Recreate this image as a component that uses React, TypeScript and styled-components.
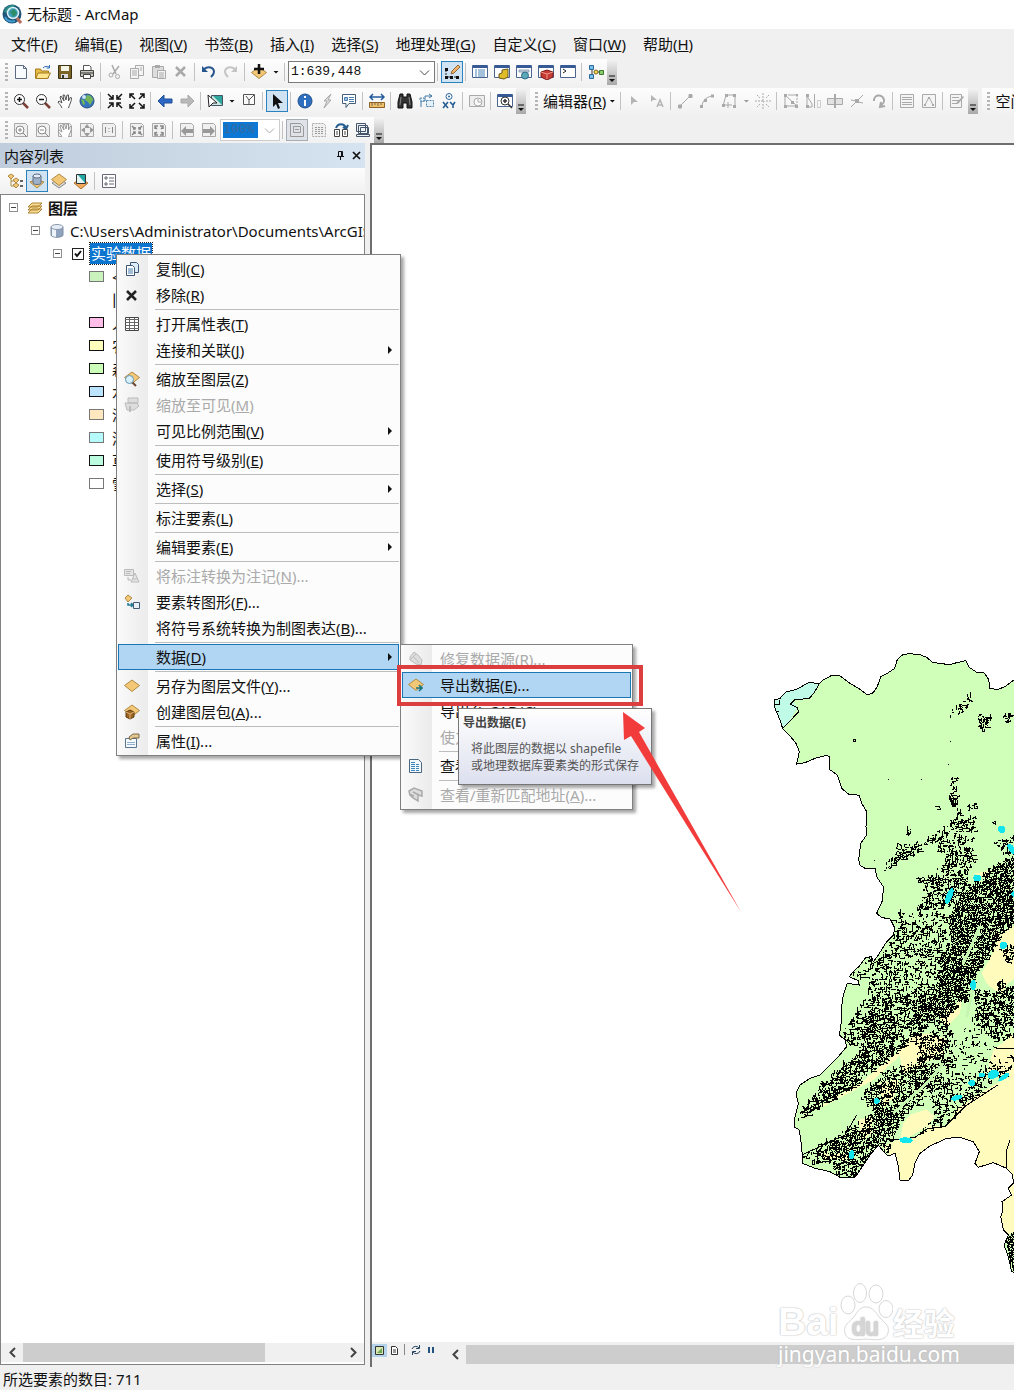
import React from 'react';
import styled, { createGlobalStyle, css } from 'styled-components';

const Global = createGlobalStyle`
  * { box-sizing: border-box; }
  body { margin: 0; background: #f0f0f0; }
  button, input, select { font: inherit; color: inherit; }
  svg { flex: none; }
`;

const Window = styled.div`
  position: relative;
  display: flex;
  flex-direction: column;
  min-height: 100vh;
  overflow: hidden;
  background: #f0f0f0;
  color: #111;
  font: 15px/20px 'Noto Sans', 'Noto Sans CJK SC', sans-serif;
  white-space: nowrap;
`;

const TitleBar = styled.header`
  display: flex;
  align-items: center;
  gap: 4px;
  height: 29px;
  padding: 0 2px 2px;
  background: #fff;
`;

const Title = styled.h1`
  margin: 0;
  font-size: 15px;
  font-weight: 400;
`;

const MenuBar = styled.nav`
  display: flex;
  align-items: center;
  gap: 1px;
  height: 30px;
  padding: 0 3px;
`;

const MenuButton = styled.button`
  border: 0;
  padding: 0 8px;
  background: none;
`;

const Toolbars = styled.div`
  display: flex;
  flex-direction: column;
  gap: 3px;
  height: 84px;
`;

const ToolRow = styled.div`
  display: flex;
  gap: 4px;
  height: 26px;
`;

const ToolStrip = styled.div`
  display: flex;
  flex: none;
  align-items: center;
  background: linear-gradient(#fdfdfd, #f1f1f1);
`;

const Grip = styled.span`
  flex: none;
  width: 3px;
  height: 18px;
  margin: 0 2px 0 5px;
  background: repeating-linear-gradient(#b5b5b5 0 2px, transparent 2px 4px);
`;

const Tool = styled.button<{ $on?: boolean; $muted?: boolean }>`
  display: flex;
  flex: none;
  align-items: center;
  justify-content: center;
  width: 22px;
  height: 22px;
  padding: 0;
  border: 1px solid transparent;
  background: none;
  ${p => p.$on && css`
    border-color: ${p.$muted ? '#a5adb5' : '#2c82bd'};
    background: ${p.$muted ? '#dfe3e7' : '#cfe3f3'};
  `}
`;

const Divider = styled.span`
  flex: none;
  width: 1px;
  height: 18px;
  margin: 0 3px 0 2px;
  background: #c2c2c2;
`;

const ShortDivider = styled(Divider)`
  height: 11px;
  background: #888;
`;

const Caret = styled.span<{ $muted?: boolean }>`
  flex: none;
  width: 6px;
  height: 3px;
  margin: 0 3px;
  background: ${p => (p.$muted ? '#999' : '#111')};
  clip-path: polygon(0 0, 100% 0, 50% 100%);
`;

const Overflow = styled.button`
  display: flex;
  align-items: flex-end;
  justify-content: center;
  align-self: stretch;
  width: 10px;
  padding: 0 0 2px;
  border: 0;
  background: linear-gradient(#f4f4f4, #a8a8a8);
`;

const ToolLabel = styled.button`
  padding: 0 0 0 3px;
  border: 0;
  background: none;
`;

const ComboBox = styled.label<{ $wide?: boolean }>`
  display: flex;
  align-items: center;
  width: ${p => (p.$wide ? '147px' : '60px')};
  height: 22px;
  padding: 0 4px 0 2px;
  border: 1px solid ${p => (p.$wide ? '#7a7a7a' : '#ccc')};
  background: #fff;
`;

const ComboSelect = styled.select<{ $picked?: boolean }>`
  flex: 1;
  min-width: 0;
  height: 16px;
  margin-right: ${p => (p.$picked ? '6px' : '0')};
  padding: 0;
  border: 0;
  appearance: none;
  background: ${p => (p.$picked ? '#0a78d4' : '#fff')};
  color: ${p => (p.$picked ? '#3a6a98' : '#111')};
  opacity: 1;
  font: 13px/16px 'Liberation Mono', monospace;
`;

const Workspace = styled.main`
  display: flex;
  flex: 1;
  gap: 5px;
`;

const Contents = styled.aside`
  display: flex;
  flex: none;
  flex-direction: column;
  width: 365px;
  padding-bottom: 2px;
`;

const PaneTitle = styled.div`
  display: flex;
  align-items: center;
  gap: 7px;
  height: 25px;
  padding: 0 4px;
  background: linear-gradient(90deg, #bfcddc, #d6e3f1);
`;

const PaneName = styled.h2`
  flex: 1;
  margin: 0;
  font-size: 15px;
  font-weight: 400;
`;

const PaneButton = styled.button`
  display: flex;
  width: 9px;
  height: 9px;
  padding: 0;
  border: 0;
  background: none;
`;

const PaneTools = styled.div`
  display: flex;
  align-items: center;
  height: 26px;
  padding-left: 4px;
  background: linear-gradient(#fdfdfd, #f1f1f1);
`;

const Tree = styled.div`
  display: flex;
  flex: 1;
  flex-direction: column;
  overflow: hidden;
  border: 1px solid #828282;
  background: #fff;
`;

const TreeRows = styled.div`
  flex: 1;
  padding-top: 1px;
`;

const TreeRow = styled.div<{ $level: number; $bold?: boolean }>`
  display: flex;
  align-items: center;
  height: 23px;
  padding-left: ${p => 8 + 22 * p.$level}px;
  font-weight: ${p => (p.$bold ? 700 : 400)};
`;

const Expander = styled.button`
  display: flex;
  flex: none;
  width: 9px;
  height: 9px;
  margin-right: 9px;
  padding: 3px 1px;
  border: 1px solid #8f8f8f;
  background: #444 content-box;
`;

const NodeText = styled.label`
  margin-left: 5px;
`;

const SelectedText = styled.label`
  margin-left: 4px;
  padding: 0 1px;
  outline: 1px dotted #222;
  background: #0b74cf;
  color: #fff;
  line-height: 21px;
`;

const CheckBox = styled.span`
  display: grid;
  width: 12px;
  height: 12px;
  margin: 0 2px 0 1px;
  > * { grid-area: 1 / 1; }
`;

const Check = styled.input`
  appearance: none;
  width: 12px;
  height: 12px;
  margin: 0;
  border: 1px solid #222;
  background: #fff;
`;

const Swatch = styled.span<{ $fill?: string; $soft?: boolean }>`
  flex: none;
  width: 15px;
  height: 11px;
  margin: 0 8px 0 14px;
  border: 1px solid ${p => (p.$fill ? (p.$soft ? '#777' : '#111') : 'transparent')};
  background: ${p => p.$fill || 'transparent'};
`;

const ScrollBar = styled.div`
  display: flex;
  flex: 1;
  align-items: center;
  height: 19px;
  background: #f0f0f0;
`;

const ScrollButton = styled.button`
  display: flex;
  flex: none;
  align-items: center;
  justify-content: center;
  width: 22px;
  height: 19px;
  padding: 0;
  border: 0;
  background: none;
`;

const ScrollTrack = styled.div`
  flex: 1;
  height: 19px;
`;

const ScrollThumb = styled.div<{ $share: string }>`
  width: ${p => p.$share};
  height: 19px;
  background: #cdcdcd;
`;

const TreeFooter = styled.div`
  display: flex;
  height: 21px;
`;

const MapPane = styled.section`
  display: flex;
  flex: 1;
  flex-direction: column;
  min-width: 0;
  padding-bottom: 3px;
  border-top: 2px solid #6e6e6e;
  border-left: 2px solid #6e6e6e;
`;

const MapView = styled.div`
  position: relative;
  flex: 1;
  overflow: hidden;
  background: #fff;
`;

const MapDrawing = styled.svg`
  position: absolute;
  left: 388px;
  top: 495px;
`;

const MapFooter = styled.div`
  display: flex;
  align-items: center;
  height: 22px;
  padding-top: 2px;
`;

const ViewButtons = styled.div`
  display: flex;
  flex: none;
  width: 72px;
`;

const ViewButton = styled.button<{ $on?: boolean }>`
  display: flex;
  align-items: center;
  justify-content: center;
  width: 15px;
  height: 13px;
  margin-bottom: 8px;
  padding: 0;
  border: 0;
  background: ${p => (p.$on ? '#b5d3ea' : 'none')};
`;

const StatusBar = styled.footer`
  height: 23px;
  padding: 2px 3px;
`;

const Menu = styled.ul<{ $x: number; $y: number; $w: number }>`
  position: absolute;
  left: ${p => p.$x}px;
  top: ${p => p.$y}px;
  width: ${p => p.$w}px;
  margin: 0;
  padding: 1px;
  list-style: none;
  border: 1px solid #808080;
  background: linear-gradient(90deg, #fafafa, #ebebeb 31px, #fcfcfc 31px);
  box-shadow: 3px 3px 3px rgba(0, 0, 0, 0.35);
`;

const MenuEntry = styled.li<{ $ruled?: boolean }>`
  ${p => p.$ruled && css`
    padding-top: 3px;
    background: linear-gradient(#bdbdbd, #bdbdbd) 37px 1px / 100% 1px no-repeat;
  `}
`;

const MenuItem = styled.button<{ $active?: boolean }>`
  display: flex;
  align-items: center;
  width: 100%;
  height: 26px;
  padding: 0 6px 0 5px;
  border: 1px solid ${p => (p.$active ? '#1b76b3' : 'transparent')};
  background: ${p => (p.$active ? '#b1d6f3' : 'none')};
  text-align: left;
  &:disabled { color: #aaa; }
`;

const MenuIcon = styled.span`
  display: flex;
  flex: none;
  width: 32px;
`;

const MenuText = styled.span`
  flex: 1;
`;

const SubArrow = styled.span`
  width: 4px;
  height: 8px;
  background: #111;
  clip-path: polygon(0 0, 100% 50%, 0 100%);
`;

const Tooltip = styled.div`
  position: absolute;
  left: 458px;
  top: 708px;
  width: 194px;
  height: 77px;
  padding: 5px 4px;
  border: 1px solid #767676;
  background: linear-gradient(#fff, #dcdfee);
  box-shadow: 3px 3px 3px rgba(0, 0, 0, 0.35);
  color: #555;
  font-size: 12px;
  line-height: 17px;
`;

const TooltipTitle = styled.strong`
  display: block;
  margin-bottom: 9px;
  color: #444;
`;

const TooltipText = styled.p`
  margin: 0;
  padding-left: 8px;
`;

const Highlight = styled.div`
  position: absolute;
  left: 397px;
  top: 665px;
  width: 246px;
  height: 41px;
  border: 4px solid #dc3d3f;
`;

const Arrow = styled.svg`
  position: absolute;
  left: 616px;
  top: 708px;
`;

const Watermark = styled.div`
  position: absolute;
  left: 778px;
  top: 1280px;
  color: #fff;
`;

const BrandRow = styled.div`
  display: flex;
  align-items: flex-end;
  height: 62px;
  font: 700 39px/40px 'Liberation Sans', sans-serif;
  text-shadow: 0 0 2px #bbb, 0 0 1px #ccc;
`;

const BrandCn = styled.span`
  font: 700 31px/40px 'Noto Sans CJK SC', sans-serif;
`;

const SiteName = styled.div`
  font: 21px/24px 'Noto Sans', sans-serif;
  text-shadow: 0 0 2px #bbb;
`;

/* ---------- icons ---------- */

const G = '#a9a9a9';
const Diamond = ({ y = 8, fill = '#f2c877' }: { y?: number; fill?: string }) => (
  <path d={`M8 ${y - 6}l7.500 5.500-7.500 6-7.500-6z`} fill={fill} stroke="#b08a45" />
);
const lens = (c: string, sign: React.ReactNode) => (
  <>
    <path d="M10 10l5 5" stroke="#7a4038" strokeWidth="2.500" />
    <circle cx="6.500" cy="6.500" r="5" fill="#fff" stroke={c} />
    {sign}
  </>
);
const hand = (c: string) => (
  <path d="M5 15c-1-3-3-4-4-6l1-1 3 2L3 4l1-1 3 5-1-6h1.500L9 7l1-5 1.500 0v6l2-4 1 1c0 4-2 6-3 10" fill="#fff" stroke={c} />
);
const page = (c: string, inner?: React.ReactNode) => (
  <>
    <path d="M1.500 1.500h11l2 2v11h-13z" fill="#f0f0f0" stroke={c} />
    {inner}
  </>
);
const windowIcon = (inner: React.ReactNode) => (
  <>
    <path d="M.5 1.500h15v12H.5z" fill="#fff" stroke="#4a6590" />
    <path d="M1 1h14v3H1z" fill="#355a96" />
    {inner}
  </>
);
const plus = <path d="M6.500 4v5M4 6.500h5" stroke="#111" strokeWidth="1.500" />;

const ICONS: Record<string, React.ReactNode> = {
  new: <><path d="M2.500 1.500h8l3 3v10h-11z" fill="#f8fbff" stroke="#5d6b80" /><path d="M10.500 1.500v3h3" stroke="#5d6b80" fill="none" /></>,
  open: <><path d="M.5 14V5h5l1 2h7v7z" fill="#e8bd45" stroke="#a37a1f" /><path d="M3 9h12.500l-3 5.500H.8z" fill="#ffe58e" stroke="#a37a1f" /><path d="M8 4c2-2 4-2 6-1M14.500 1v3h-3" stroke="#2e6db5" fill="none" /></>,
  save: <><path d="M1.500 1.500h13v13h-13z" fill="#7b6426" stroke="#3c3215" /><path d="M4 2h8v5H4z" fill="#f3f3e6" /><path d="M4 10h7v4H4z" fill="#ddd" /><path d="M5 11h2v3H5z" fill="#333" /></>,
  print: <><path d="M4.500 6V1.500h6l1.500 1.500v3" fill="#fff" stroke="#555" /><path d="M1.500 6.500h13v6h-13z" fill="#c9c9bf" stroke="#444" /><path d="M4.500 10.500h7v4h-7z" fill="#fff" stroke="#444" /><path d="M2 9h12" stroke="#333" /></>,
  scissors: <><path d="M5 1l4 9M12 2L6 10" stroke={G} strokeWidth="1.500" /><circle cx="4" cy="11" r="2" stroke={G} fill="none" /><circle cx="10.500" cy="12.500" r="2" stroke={G} fill="none" /></>,
  copyOff: <><path d="M6.500 1.500h8v10h-8z" fill="#f4f4f4" stroke={G} /><path d="M1.500 4.500h8v10h-8z" fill="#f4f4f4" stroke={G} /><path d="M3 7h5M3 9h5M3 11h5M11 4h2M11 6h2" stroke={G} /></>,
  copy: <><path d="M6.500 1.500h6l2 2v8h-8z" fill="#dcecf8" stroke="#3b5674" /><path d="M2.500 4.500h6l2 2v8h-8z" fill="#fff" stroke="#3b5674" /><path d="M4 8h5M4 10h5M4 12h5" stroke="#447cab" /></>,
  paste: <><path d="M1.500 2.500h11v11h-11z" fill="#ddd" stroke={G} /><path d="M4 1h5v3H4z" fill={G} /><path d="M6.500 6.500h8v8h-8z" fill="#f4f4f4" stroke={G} /><path d="M8 9h5M8 11h5M8 13h5" stroke={G} /></>,
  xOff: <path d="M3 3l9 9M12 3l-9 9" stroke={G} strokeWidth="2.500" />,
  x: <path d="M3 4l9 9M12 4l-9 9" stroke="#222" strokeWidth="2.500" />,
  undo: <><path d="M3 5c4-3 10-2 10 3 0 2-1 3-3 5" stroke="#26558d" fill="none" strokeWidth="2" /><path d="M1 2v6h6z" fill="#26558d" /></>,
  redo: <><path d="M12 5C8 2 2 3 2 8c0 2 1 3 3 5" stroke="#c4c4c4" fill="none" strokeWidth="2" /><path d="M14 2v6H8z" fill="#c4c4c4" /></>,
  add: <><Diamond y={9} /><path d="M8 0v10M3 5h10" stroke="#111" strokeWidth="2.500" /></>,
  edit: <><path d="M2 6v7h12v-2" stroke="#222" fill="none" strokeDasharray="2 1" /><path d="M1 4h3v3H1zM1 12h3v3H1zM6 12h3v3H6zM12 12h3v3h-3z" fill="#111" /><path d="M7 10l1-3 6-6 2 2-6 6z" fill="#efb56a" stroke="#94643b" /></>,
  toc: windowIcon(<path d="M3 6h2M3 8h2M3 10h2M3 12h2M6 6h7M6 8h7M6 10h7M6 12h7" stroke="#4b83b8" />),
  catalog: windowIcon(<path d="M5 14v-4l3-1V6l6-1v8l-4 2z" fill="#dfbc28" stroke="#6d5b18" />),
  search: windowIcon(<><path d="M3 6h10v2H3z" fill="#ccd9e4" stroke="#8aa0b5" /><circle cx="9" cy="11.500" r="3.500" fill="#57a9b7" stroke="#356a8a" /></>),
  toolbox: windowIcon(<><path d="M3 8l6-2 6 2v5l-6 3-6-3z" fill="#c63b32" stroke="#7d1f1c" /><path d="M3 8l6 2 6-2M9 10v5" stroke="#f0958d" /></>),
  python: windowIcon(<path d="M3 5l3 2-3 2" stroke="#222" fill="none" />),
  model: <><path d="M4 4v8M6 8h5" stroke="#333" /><path d="M1.500 1.500h4v4h-4zM1.500 10.500h4v4h-4z" fill="#7bc0e8" stroke="#28689c" /><circle cx="8" cy="8" r="2" fill="#f3d55c" stroke="#7d6820" /><path d="M11.500 6.500h4v4h-4z" fill="#8acb6b" stroke="#3f7a31" /></>,
  zoomIn: lens('#333', plus),
  zoomOut: lens('#333', <path d="M4 6.500h5" stroke="#111" strokeWidth="1.500" />),
  hand: hand('#555'),
  globe: <><circle cx="8" cy="8" r="7" fill="#3675bb" stroke="#2b4f7e" /><path d="M8 2c4 0 6 3 6 5l-3 5-2-3-3-2zM2 6l3 1 1 4-2 1z" fill="#74b657" /><circle cx="5" cy="4" r="2" fill="#cde6f5" /></>,
  shrink: <path d="M1 1l4 4M15 1l-4 4M1 15l4-4M15 15l-4-4M2 6h4V2M14 6h-4V2M2 10h4v4M14 10h-4v4" stroke="#111" fill="none" strokeWidth="1.500" />,
  grow: <path d="M2 2l4 4M14 2l-4 4M2 14l4-4M14 14l-4-4M1 5V1h4M15 5V1h-4M1 11v4h4M15 11v4h-4" stroke="#111" fill="none" strokeWidth="1.500" />,
  back: <path d="M1 8l6-6v4h8v4H7v4z" fill="#2d68c4" stroke="#214d94" />,
  forward: <path d="M15 8L9 2v4H2v4h7v4z" fill="#b9b9b9" stroke="#aaa" />,
  select: <><path d="M4.500 2.500h11v10h-11z" fill="#cfe8e3" stroke="#456" /><path d="M6 3h9v9z" fill="#2fa79c" /><path d="M1 2l9 8H6l-4 4z" fill="#fff" stroke="#222" /></>,
  clear: <path d="M2.500 1.500h11v10h-11zM5 3l3 4 5-5M8 7v4" fill="#fafafa" stroke="#555" />,
  pointer: <path d="M4 1v13l3-3 2 5 2-1-2-5h5z" fill="#111" />,
  info: <><circle cx="8" cy="8" r="7" fill="#2f6fc0" stroke="#214f8b" /><path d="M8 3v2M8 7v6" stroke="#fff" strokeWidth="2" /></>,
  bolt: <path d="M12 1L5 8h3l-3 7 7-8H9z" fill="#ddd" stroke={G} />,
  popup: <><path d="M1.500 1.500h13v9H8l-3 4v-4H1.500z" fill="#fff" stroke="#445d78" /><path d="M3.500 4.500h3v3h-3zM8 4.500h5M8 6.500h5M8 8.500h5" stroke="#4a7fb0" fill="#9cc4e2" /></>,
  measure: <><path d="M1 4h14M4 1L1 4l3 3M12 1l3 3-3 3" stroke="#245a9b" fill="none" strokeWidth="1.500" /><path d="M.5 9.500h15v5H.5z" fill="#efc16a" stroke="#8b6227" /><path d="M3 10v3M6 10v2M9 10v3M12 10v2" stroke="#765" /></>,
  find: <><path d="M3 1h3v3h4V1h3l2 8v6h-5v-5H6v5H1V9z" fill="#333" stroke="#111" /><path d="M4 4L3 12M12 4l1 8" stroke="#888" /></>,
  route: <><path d="M2 14V8h4V3h7M10 1l3 2-3 2" stroke="#3f78a9" fill="none" /><path d="M1 5h4v3H1zM7.500 7.500h7v6h-7z" fill="#e5f1fa" stroke="#4e84ad" strokeDasharray="2 1" /></>,
  xy: <><circle cx="8" cy="3.500" r="3" fill="#fff" stroke="#2d67a0" /><circle cx="8" cy="3.500" r="1" fill="#2d67a0" /><path d="M2 9l5 6M7 9l-5 6M9 9l3 3 2-3M12 12v3" stroke="#215992" strokeWidth="1.500" fill="none" /></>,
  time: <><path d="M.5 2.500h15v11H.5z" fill="#eee" stroke={G} /><circle cx="9" cy="9" r="4" fill="#fafafa" stroke={G} /><path d="M9 6v3h3" stroke={G} fill="none" /></>,
  viewer: windowIcon(<><circle cx="8" cy="8" r="4" fill="#fff" stroke="#333" /><path d="M8 6v4M6 8h4M11 11l4 4" stroke="#333" strokeWidth="1.500" /></>),
  editPlay: <path d="M4 3v9l3-3h4z" fill="#b4b4b4" />,
  editPlayA: <><path d="M2 2v7l2-2h4z" fill="#b4b4b4" /><path d="M8 14l3-7 3 7M9 12h4" fill="none" stroke="#b4b4b4" strokeWidth="1.500" /></>,
  line: <path d="M3 13L13 3M1.500 12h3v3h-3zM12 1.500h3v3h-3z" stroke={G} fill={G} />,
  arc: <><path d="M3 14c0-6 4-10 10-11" stroke={G} fill="none" /><path d="M1 12h3v3H1zM5 6h3v3H5zM12 1.500h3v3h-3z" fill={G} /></>,
  trace: <><path d="M2 13L5 2h9v12M3 12h8M7 9v6" stroke={G} fill="none" /><path d="M1 11h3v3H1zM4 1h3v3H4zM12 1h3v3h-3zM12 12h3v3h-3z" fill={G} /></>,
  spark: <path d="M8 0v5M8 11v5M0 8h5M11 8h5M2 2l3 3M11 11l3 3M14 2l-3 3M5 11l-3 3M7 7h2v2H7z" stroke={G} strokeDasharray="2 1" />,
  reshape: <><path d="M2 2v11h12zM5 2h9" stroke={G} fill="none" /><path d="M14 2v11" stroke={G} strokeDasharray="2 1" /><path d="M1 1h3v3H1zM1 12h3v3H1zM12 12h3v3h-3zM8 8h3v3H8zM13 1h2v2h-2z" fill={G} /></>,
  cutPoly: <><path d="M2 2v12M2 3l5 8v3H2M9.500 1v14" stroke={G} fill="none" /><path d="M1 1h3v3H1zM1 12h3v3H1z" fill={G} /><path d="M12.500 7.500h3v7h-3z" stroke={G} strokeDasharray="1 1" /></>,
  split: <><path d="M.5 5.500h15v6H.5z" fill="#e2e2e2" stroke={G} /><path d="M8 1v14" stroke={G} strokeWidth="2" /></>,
  divide: <><path d="M2 14L14 2M2 7l5 1M9 9l5 1" stroke={G} /><path d="M6 6h4v4H6z" fill={G} /></>,
  rotate: <path d="M3 8a5 5 0 1 1 7 4M10 9l-1 5 5-1" stroke={G} fill="none" strokeWidth="2" />,
  table: <><path d="M1.500 1.500h13v13h-13z" fill="#fff" stroke="#444" /><path d="M1 3.500h14M1 6.500h14M1 9.500h14M1 12.500h14M5.500 2v12M10.500 2v12" stroke="#666" /></>,
  tableOff: <path d="M1.500 1.500h13v13h-13zM3 4.500h10M3 6.500h10M3 9.500h10M3 11.500h10" fill="#f4f4f4" stroke={G} />,
  vertices: <><path d="M1.500 1.500h13v13h-13zM4 12l4-8 4 8" fill="#f4f4f4" stroke={G} /><path d="M3 11h2v2H3zM7 4h2v2H7zM11 11h2v2h-2z" fill={G} /></>,
  form: <><path d="M1.500 1.500h11v13h-11zM3 4.500h7M3 7.500h7M3 10.500h5" fill="#f4f4f4" stroke={G} /><path d="M7 10l7-7 1 1-6 7z" fill={G} /></>,
  pgZoomIn: page(G, <><circle cx="7" cy="8" r="4" fill="#fff" stroke="#888" /><path d="M7 6v4M5 8h4M10 11l4 4" stroke="#888" /></>),
  pgZoomOut: page(G, <><circle cx="7" cy="8" r="4" fill="#fff" stroke="#888" /><path d="M5 8h4M10 11l4 4" stroke="#888" /></>),
  pgHand: page(G, hand('#999')),
  pgFull: page(G, <path d="M8 2L5 6h6zM8 15l-3-4h6zM2 8l4-3v6zM15 8l-4-3v6z" fill="#999" />),
  pgOne: page(G, <path d="M4.500 5v6M8 6v1M8 9v1M11.500 5v6" stroke="#888" />),
  pgShrink: page(G, <path d="M3 4l3 3M13 4l-3 3M3 13l3-3M13 13l-3-3M4 7h2V5M12 7h-2V5M4 10h2v2M12 10h-2v2" stroke="#888" fill="none" strokeWidth="1.500" />),
  pgGrow: page(G, <path d="M4 5l2 2M12 5l-2 2M4 12l2-2M12 12l-2-2M4 7V4h3M12 7V4H9M4 10v3h3M12 10v3H9" stroke="#888" fill="none" strokeWidth="1.500" />),
  pgBack: page(G, <path d="M2 9l5-5v3h7v4H7v3z" fill="#999" />),
  pgNext: page(G, <path d="M14 9L9 4v3H2v4h7v3z" fill="#999" />),
  draft: <path d="M1.500 1.500h10l3 3v10h-13zM4.500 4.500h7v6h-7zM6 7.500h4" fill="none" stroke="#999" />,
  focus: <><path d="M1.500 1.500h11l2 2v11h-13z" stroke={G} strokeDasharray="2 1" fill="#f0f0f0" /><path d="M4 5.500h8M4 7.500h8M4 9.500h8M4 11.500h8" stroke="#999" strokeDasharray="2 1" /></>,
  change: <><path d="M3 6c2-5 8-5 10 0M10 5l3 2 2-4" stroke="#235c91" fill="none" strokeWidth="2" /><path d="M1.500 7.500h5v7h-5zM9.500 7.500h5v7h-5z" fill="#fff" stroke="#444" /><path d="M3 10h2M3 12h2M11 10h2M11 12h2" stroke="#444" /></>,
  pages: <path d="M1.500 1.500h9v8h-9zM3.500 3.500h9v8h-9zM5.500 5.500h8v6h-8zM1.500 14.500h13v-2h-13z" fill="#edf3f7" stroke="#46566a" />,
  byOrder: <><path d="M4 5v8h5M4 8h6" stroke="#b08a45" fill="none" /><path d="M1 3l3-2 3 2-3 3zM6 7l3-2 3 2-3 3zM6 12l3-2 3 2-3 3z" fill="#f2c877" stroke="#b08a45" /><path d="M13 8h3M13 13h3" stroke="#333" strokeWidth="1.500" /></>,
  cylinder: <><path d="M2 4v8c0 3 12 3 12 0V4" fill="#8fa3be" stroke="#7d8da3" /><path d="M3 5v8l4 1V5z" fill="#eef3f9" /><ellipse cx="8" cy="4" rx="6" ry="2.500" fill="#e6edf6" stroke="#8a99ad" /></>,
  bySource: <><path d="M1 9l7 6 7-6-3-1H4z" fill="#f2c877" stroke="#b08a45" /><path d="M4 3v7c0 2 8 2 8 0V3" fill="#9fb1c8" stroke="#5d6e85" /><ellipse cx="8" cy="3" rx="4" ry="2" fill="#e6edf6" stroke="#5d6e85" /></>,
  visible: <><path d="M1 10l7-5 7 5-7 5z" fill="#d9d9d9" stroke="#888" /><Diamond y={7} /></>,
  bySelect: <><path d="M1 10l7-4 7 4-7 6z" fill="#f2a858" stroke="#b07535" /><path d="M3.500 1.500h9v9h-9z" fill="#e3f4f2" stroke="#333" /><path d="M5 2h7v8z" fill="#22a7a4" /></>,
  options: <path d="M1.500 1.500h13v13h-13zM4 4h2v2H4zM4 10h2v2H4zM8 5h5M8 8h5M8 11h5" fill="#fff" stroke="#667" />,
  layers: <path d="M1 13h10l4-4H5zM1 10h10l4-4H5zM1 7h10l4-4H5z" fill="#f7dc92" stroke="#ae8434" />,
  diamond: <Diamond />,
  zoomLayer: <><Diamond y={7} /><path d="M8 11l4 4" stroke="#6b4630" strokeWidth="2" /><circle cx="5.500" cy="8.500" r="4" fill="#d9effa" stroke="#6195b5" /></>,
  zoomVisible: <><path d="M4 1h10v5H4zM1 6h12l2 3-5 4H3z" fill="#ddd" stroke="#bbb" /><path d="M6 9v6" stroke="#bbb" strokeWidth="2" /></>,
  annotate: <><path d="M.5 1.500h9v6h-9zM2 3.500h5M2 5.500h4" fill="#e4e4e4" stroke="#bbb" /><path d="M4 9v3h3M7 14l4-9 4 9zM9 11h4" stroke="#bbb" fill="#e4e4e4" /></>,
  toGraphic: <><path d="M1 4l3-3 4 3-4 4z" fill="#f2c877" stroke="#b08a45" /><path d="M4 9v2h5M7 9l2 2-2 2" stroke="#227a94" fill="none" strokeWidth="1.500" /><path d="M9.500 8.500h6v6h-6z" fill="#e9eff6" stroke="#445b77" /></>,
  pack: <><Diamond y={7} /><path d="M2 8l4-2 4 2v5l-4 2-4-2z" fill="#9b6424" stroke="#5c3a11" /><path d="M2 8l4 2 4-2M6 10v5" stroke="#e0b070" /></>,
  props: <><path d="M1.500 5.500h11v9h-11z" fill="#f5f9fc" stroke="#5b7590" /><path d="M3 9.500h8M3 11.500h8" stroke="#8fb0cc" /><path d="M5 4l4-3h6v4H9l-3 2z" fill="#e3c891" stroke="#7c6a48" /></>,
  repair: <path d="M2 6l4-5 4 3 4 5-1 5-5-1-6-4zM5 5l6 7M8 3L3 8" fill="#ddd" stroke="#bbb" />,
  exportData: <><Diamond /><path d="M8 11h6M11 8l3 3-3 3" stroke="#19747d" fill="none" strokeWidth="1.700" /></>,
  metadata: <><path d="M1.500 1.500h9l3 3v10h-12z" fill="#f1f8fd" stroke="#4b6780" /><path d="M3 4.500h5M3 6.500h8M3 8.500h8M3 10.500h8M3 12.500h8" stroke="#3f86ba" strokeDasharray="4 1" /></>,
  address: <path d="M1 4l5-3 8 3v5l-4-1v6l-5-3-3-3zM5 5l6 3M1 7l5 2" fill="#ddd" stroke="#aaa" strokeWidth="1.500" />,
};

const Icon = ({ name }: { name: string }) => (
  <svg width="16" height="16" viewBox="0 0 16 16" fill="none" aria-hidden="true">{ICONS[name]}</svg>
);

const Chevron = ({ dir, color = '#444', w = 1 }: { dir: 'left' | 'right' | 'down'; color?: string; w?: number }) => (
  <svg width="11" height="11" viewBox="0 0 11 11" fill="none" stroke={color} strokeWidth={w} aria-hidden="true">
    <path d={dir === 'down' ? 'M1 3.500l4.500 4.500 4.500-4.500' : dir === 'left' ? 'M8 1L3.500 5.500 8 10' : 'M3 1l4.500 4.500L3 10'} />
  </svg>
);

/* Underlines the access key written in brackets. */
const Label = ({ text }: { text: string }) => {
  const m = text.match(/^(.*\()([A-Z])(\).*)$/);
  return m ? <>{m[1]}<u>{m[2]}</u>{m[3]}</> : <>{text}</>;
};

/* "|" is a divider, "v" a caret, a leading "*" a pressed button. */
const Tools = ({ list }: { list: string }) => (
  <>
    {list.split(' ').map((n, i) => {
      if (n === '|') return <Divider key={i} />;
      if (n === 'v') return <Caret key={i} />;
      const name = n.replace('*', '');
      return (
        <Tool key={i} $on={n[0] === '*'} $muted={name === 'draft'} aria-label={name}>
          <Icon name={name} />
        </Tool>
      );
    })}
  </>
);

const More = () => (
  <Overflow aria-label="more">
    <svg width="8" height="8" viewBox="0 0 8 8" aria-hidden="true"><path d="M1 1h6" stroke="#111" /><path d="M1 4h6L4 7z" fill="#111" /></svg>
  </Overflow>
);

/* ---------- map ---------- */

type Pt = [number, number];
const pts = (s: string): Pt[] => s.split(' ').map(p => p.split(',').map(Number) as Pt);

const LAND =
  '770,114 735,140 712,149 690,145 686,118 672,98 650,97 628,82 617,62 590,68 570,74 545,71 518,67 500,52 480,44 450,41 430,43 412,58 404,85 385,98 362,110 352,140 340,158 322,165 300,148 270,130 240,108 215,106 190,120 178,130 145,128 110,148 78,156 60,175 43,180 45,205 60,240 68,266 90,288 108,310 118,335 110,372 135,368 165,355 200,346 210,352 208,388 232,405 245,445 265,462 298,466 305,490 320,515 318,560 320,585 302,610 296,660 300,676 315,685 345,684 350,710 370,740 368,780 350,820 365,833 390,836 405,865 400,885 380,905 355,945 340,965 335,950 318,952 298,978 280,995 268,1010 295,1022 298,1035 262,1030 250,1065 245,1100 245,1140 238,1185 255,1200 260,1220 235,1250 200,1285 180,1305 150,1315 120,1335 108,1360 115,1390 105,1430 102,1460 118,1470 125,1520 128,1570 165,1585 210,1595 240,1612 285,1612 300,1590 330,1545 355,1515 370,1535 385,1548 405,1540 415,1580 420,1620 445,1622 458,1605 465,1570 480,1540 510,1518 560,1495 600,1492 640,1505 658,1535 645,1570 655,1582 700,1568 740,1585 758,1605 760,1630 745,1645 755,1665 745,1672 726,1685 728,1715 722,1730 730,1770 745,1785 732,1815 745,1850 755,1895 770,1900';

const YELLOW = [
  '770,1300 720,1325 660,1360 600,1400 555,1460 510,1455 480,1480 450,1500 410,1500 370,1520 400,1560 410,1640 480,1640 600,1600 770,1800',
  '430,1450 450,1425 500,1408 525,1430 500,1460 450,1490 420,1500',
  '770,850 720,885 695,945 665,1000 680,1030 720,1065 745,1030 770,1010',
  '560,1105 605,1080 600,1120 560,1160 540,1135',
  '450,1190 500,1180 555,1195 550,1240 500,1265 430,1300 415,1230',
  '160,1410 300,1330 420,1230 455,1215 340,1320 200,1395',
  '355,1330 420,1315 400,1375 370,1405',
  '295,1440 335,1430 335,1480 305,1500',
  '170,1540 270,1540 260,1562 200,1560',
  '700,1230 770,1175 770,1310 680,1300',
  '725,1785 745,1785 762,1770 762,1600 720,1600',
  '645,700 700,690 670,712',
];

/* [outline, number of marks] for each parcel texture */
const TEXTURE: [string, number][] = [
  ['600,185 635,172 640,190 600,225 560,235', 22],
  ['650,215 690,240 675,270 655,262', 45],
  ['722,228 756,222 740,250', 18],
  ['572,410 592,410 590,500 602,525 568,490', 36],
  ['592,520 640,490 650,500 600,530', 14],
  ['585,540 650,525 640,600 645,670 600,730 530,690 560,650 490,610 560,550', 290],
  ['365,705 390,650 440,615 475,610 470,650 420,660', 80],
  ['435,590 445,565 462,575 455,590', 6],
  ['465,715 600,700 640,740 600,800 465,810 500,760', 270],
  ['745,600 762,575 762,650 735,660 700,600', 50],
  ['762,650 700,680 600,770 565,830 570,900 540,960 530,1040 450,1150 560,1130 620,1080 650,1000 690,940 720,890 762,850', 2700],
  ['410,820 565,820 540,960 500,1100 400,1200 260,1220 245,1185 320,1060 350,960 400,890', 800],
  ['370,1070 520,1060 560,1130 470,1180 300,1230 250,1200', 380],
  ['105,1440 180,1340 300,1230 420,1200 480,1170 440,1215 380,1260 270,1350 130,1430', 560],
  ['300,1370 380,1290 440,1280 560,1200 560,1260 480,1350 400,1440 340,1530 280,1610 235,1605 170,1550 250,1480 340,1420', 1150],
  ['480,1150 560,1140 570,1190 540,1260 470,1250 460,1190', 150],
  ['330,1430 450,1380 500,1330 560,1260 540,1330 430,1430 380,1540 350,1520', 260],
  ['640,1050 700,1060 762,1100 762,1190 700,1210 640,1130', 280],
  ['570,1200 640,1130 710,1190 700,1300 590,1340 550,1290', 110],
  ['500,1330 640,1310 720,1290 640,1380 550,1460 470,1490 520,1430', 270],
  ['720,1260 762,1240 762,1290 700,1330', 25],
  ['720,920 762,910 762,960 730,970', 40],
  ['720,1020 762,1040 762,1140 700,1080', 120],
  ['120,1545 260,1470 300,1500 170,1580', 110],
  ['270,1000 340,945 345,980 300,1030', 30],
  ['735,1790 762,1785 762,1895 745,1850', 130],
];

const CYAN: [number, number, number, number, number][] = [
  [725, 568, 11, 11, 0], [755, 627, 18, 9, 55], [652, 714, 12, 10, 0], [568, 768, 26, 9, -68],
  [730, 916, 11, 11, 0], [640, 1035, 9, 15, 0], [350, 1383, 9, 8, 0], [275, 1544, 8, 14, 10],
  [438, 1501, 20, 9, 5], [590, 1373, 18, 8, -15], [635, 1329, 10, 9, 0], [665, 1305, 9, 7, 0],
  [700, 1303, 18, 13, -20], [732, 1311, 20, 7, -35], [760, 762, 6, 8, 0],
];

const inside = (x: number, y: number, poly: Pt[]) => {
  let hit = false;
  for (let i = 0, j = poly.length - 1; i < poly.length; j = i++) {
    const [xi, yi] = poly[i];
    const [xj, yj] = poly[j];
    if (yi > y !== yj > y && x < ((xj - xi) * (y - yi)) / (yj - yi) + xi) hit = !hit;
  }
  return hit;
};

const buildTexture = () => {
  let seed = 7;
  const rnd = () => {
    seed = (seed * 16807) % 2147483647;
    return seed / 2147483647;
  };
  const marks: string[] = [];
  const gaps: string[] = [];
  TEXTURE.forEach(([outline, count]) => {
    const poly = pts(outline);
    const xs = poly.map(p => p[0]);
    const ys = poly.map(p => p[1]);
    const x0 = Math.min(...xs);
    const y0 = Math.min(...ys);
    const w = Math.max(...xs) - x0;
    const h = Math.max(...ys) - y0;
    let placed = 0;
    for (let k = 0; placed < count && k < count * 12; k++) {
      const x = Math.round((x0 + rnd() * w) / 3) * 3;
      const y = Math.round((y0 + rnd() * h) / 3) * 3;
      if (!inside(x, y, poly)) continue;
      placed++;
      let d = `M${x} ${y}`;
      const steps = 3 + Math.floor(rnd() * 4);
      for (let s = 0; s < steps; s++) {
        const run = Math.round((rnd() - 0.35) * 4) * 3;
        d += rnd() < 0.5 ? `h${run}` : `v${-run}`;
      }
      marks.push(d);
      if (rnd() < 0.45) gaps.push(`M${x + 3 * Math.floor(rnd() * 5)} ${y - 3 * Math.floor(rnd() * 5)}h3`);
    }
  });
  return { marks: marks.join(''), gaps: gaps.join('') };
};

const texture = buildTexture();

const LandMap = () => (
  <MapDrawing width="254" height="640" viewBox="0 0 762 1920" shapeRendering="crispEdges" role="img" aria-label="map">
    <defs><clipPath id="land"><polygon points={LAND} /></clipPath></defs>
    <polygon points={LAND} fill="#d0ffba" />
    <g clipPath="url(#land)">
      {YELLOW.map(p => <polygon key={p} points={p} fill="#fffbbd" />)}
      <path d="M43 180l17-5 18-19 32-8 35-20h33l-15 30-20 16-50 5 20 22-20 35-25 32-23-60z" fill="#bffbe6" />
      <path d="M178 130l-15 28-15 17-45 5-12 12 22 12 2 12-25 27-22 23M45 192h14v-12M44 215h14" fill="none" stroke="#000" strokeWidth="3" />
      <path d={texture.marks} fill="none" stroke="#000" strokeWidth="3" />
      <path d={texture.gaps} fill="none" stroke="#d0ffba" strokeWidth="3" />
      <path d="M280 298h6v6h-6zM384 417h4M483 417h4M569 303h4M565 372h3M343 662h3M525 500l14 0 2 7h-10M410 625l4-15 12 8-4 12zM698 548l8-4v8z" fill="none" stroke="#000" strokeWidth="3" />
      <path d="M125 1545l130-60 35-60M120 1420l160-82 20-10M405 1500l60-8 40-28 15 0 35-5 60-60 100-65M700 1220l14 6 48-2M750 1500l-12 35 2 50" fill="none" stroke="#000" strokeWidth="3" />
      <path d="M400 1420l100-90 50-60M620 1130l25-110M610 970l50-110" stroke="#c5f5b0" strokeWidth="9" />
    </g>
    <polygon points={LAND} fill="none" stroke="#000" strokeWidth="3" />
    {CYAN.map(([x, y, rx, ry, a]) => (
      <ellipse key={`${x}-${y}`} cx={x} cy={y} rx={rx} ry={ry} fill="#12e5ee" transform={`rotate(${a} ${x} ${y})`} />
    ))}
  </MapDrawing>
);

/* ---------- data ---------- */

const MENUS = ['文件(F)', '编辑(E)', '视图(V)', '书签(B)', '插入(I)', '选择(S)', '地理处理(G)', '自定义(C)', '窗口(W)', '帮助(H)'];

type Item = { text: string; icon?: string; rule?: boolean; off?: boolean; sub?: boolean; active?: boolean };

const LAYER_MENU: Item[] = [
  { text: '复制(C)', icon: 'copy' },
  { text: '移除(R)', icon: 'x' },
  { text: '打开属性表(T)', icon: 'table', rule: true },
  { text: '连接和关联(J)', sub: true },
  { text: '缩放至图层(Z)', icon: 'zoomLayer', rule: true },
  { text: '缩放至可见(M)', icon: 'zoomVisible', off: true },
  { text: '可见比例范围(V)', sub: true },
  { text: '使用符号级别(E)', rule: true },
  { text: '选择(S)', rule: true, sub: true },
  { text: '标注要素(L)', rule: true },
  { text: '编辑要素(E)', rule: true, sub: true },
  { text: '将标注转换为注记(N)...', icon: 'annotate', rule: true, off: true },
  { text: '要素转图形(F)...', icon: 'toGraphic' },
  { text: '将符号系统转换为制图表达(B)...' },
  { text: '数据(D)', rule: true, sub: true, active: true },
  { text: '另存为图层文件(Y)...', icon: 'diamond', rule: true },
  { text: '创建图层包(A)...', icon: 'pack' },
  { text: '属性(I)...', icon: 'props', rule: true },
];

const DATA_MENU: Item[] = [
  { text: '修复数据源(R)...', icon: 'repair', off: true },
  { text: '导出数据(E)...', icon: 'exportData', active: true },
  { text: '导出至 CAD(C)...' },
  { text: '使之永久(M)', off: true },
  { text: '查看项目描述(V)...', icon: 'metadata', rule: true },
  { text: '查看/重新匹配地址(A)...', icon: 'address', rule: true, off: true },
];

const LEGEND: { text: string; fill?: string; soft?: boolean }[] = [
  { text: '<其他所有值>', fill: '#c9f2bd', soft: true },
  { text: '旧分类' },
  { text: '人工表面', fill: '#ffbde8' },
  { text: '农田', fill: '#ffffbd' },
  { text: '森林', fill: '#ccffb8' },
  { text: '水体', fill: '#bde4ff' },
  { text: '湿地', fill: '#ffe8bf', soft: true },
  { text: '湖泊', fill: '#b5fbfb', soft: true },
  { text: '草地', fill: '#bdfbe0' },
  { text: '雪冰', fill: '#fff', soft: true },
];

const PopupMenu = ({ items, x, y, w }: { items: Item[]; x: number; y: number; w: number }) => (
  <Menu $x={x} $y={y} $w={w}>
    {items.map(i => (
      <MenuEntry key={i.text} $ruled={i.rule}>
        <MenuItem $active={i.active} disabled={i.off}>
          <MenuIcon>{i.icon && <Icon name={i.icon} />}</MenuIcon>
          <MenuText><Label text={i.text} /></MenuText>
          {i.sub && <SubArrow />}
        </MenuItem>
      </MenuEntry>
    ))}
  </Menu>
);

export default function App() {
  const [shown, setShown] = React.useState(true);
  return (
    <Window>
      <Global />
      <TitleBar>
        <svg width="21" height="22" viewBox="0 0 21 22" aria-hidden="true">
          <circle cx="10" cy="11" r="9.500" fill="#1f5576" />
          <path d="M2 9c1-5 6-8 11-7l-3 5-5 3z" fill="#2c8d86" />
          <path d="M15 15l4 5" stroke="#b96c5c" strokeWidth="3" />
          <circle cx="11" cy="10" r="5.500" fill="#3c9db5" stroke="#dceff5" strokeWidth="1.500" />
          <path d="M8 9l4-3 3 4-3 4z" fill="#2d8d66" />
          <path d="M3 14c2 4 6 5 10 4" stroke="#3f9bd0" strokeWidth="2" fill="none" />
        </svg>
        <Title>无标题 - ArcMap</Title>
      </TitleBar>
      <MenuBar>
        {MENUS.map(m => <MenuButton key={m}><Label text={m} /></MenuButton>)}
      </MenuBar>
      <Toolbars>
        <ToolRow>
          <ToolStrip>
            <Grip />
            <Tools list="new open save print | scissors copyOff paste xOff | undo redo | add v |" />
            <ComboBox $wide>
              <ComboSelect aria-label="scale"><option>1:639,448</option></ComboSelect>
              <Chevron dir="down" />
            </ComboBox>
            <Tools list="| *edit | toc catalog search toolbox python | model" />
            <More />
          </ToolStrip>
        </ToolRow>
        <ToolRow>
          <ToolStrip>
            <Grip />
            <Tools list="zoomIn zoomOut hand globe | shrink grow | back forward | select v clear | *pointer | info bolt popup | measure | find route xy | time | viewer" />
            <More />
          </ToolStrip>
          <ToolStrip>
            <Grip />
            <ToolLabel><Label text="编辑器(R)" /></ToolLabel>
            <Tools list="v | editPlay editPlayA | line arc trace" />
            <Caret $muted />
            <Tools list="spark | reshape cutPoly split divide rotate | tableOff vertices | form" />
            <More />
          </ToolStrip>
          <ToolStrip>
            <Grip />
            <ToolLabel>空间校正(P)</ToolLabel>
          </ToolStrip>
        </ToolRow>
        <ToolRow>
          <ToolStrip>
            <Grip />
            <Tools list="pgZoomIn pgZoomOut pgHand pgFull pgOne | pgShrink pgGrow | pgBack pgNext" />
            <ComboBox>
              <ComboSelect $picked disabled aria-label="zoom"><option>100%</option></ComboSelect>
              <Chevron dir="down" color="#aaa" />
            </ComboBox>
            <Tools list="| *draft focus change pages" />
            <More />
          </ToolStrip>
        </ToolRow>
      </Toolbars>

      <Workspace>
        <Contents>
          <PaneTitle>
            <PaneName>内容列表</PaneName>
            <PaneButton aria-label="pin">
              <svg width="9" height="9" viewBox="0 0 9 9" fill="none" stroke="#111"><path d="M2.500 5V.5h4V5M1 5.500h7M4.500 6v3M5.500 1v4" /></svg>
            </PaneButton>
            <PaneButton aria-label="close">
              <svg width="9" height="9" viewBox="0 0 9 9" stroke="#111" strokeWidth="1.700"><path d="M1 1l7 7M8 1L1 8" /></svg>
            </PaneButton>
          </PaneTitle>
          <PaneTools><Tools list="byOrder *bySource visible bySelect | options" /></PaneTools>
          <Tree>
            <TreeRows>
              <TreeRow $level={0} $bold>
                <Expander aria-label="collapse" /><Icon name="layers" /><NodeText>图层</NodeText>
              </TreeRow>
              <TreeRow $level={1}>
                <Expander aria-label="collapse" /><Icon name="cylinder" />
                <NodeText>C:\Users\Administrator\Documents\ArcGIS</NodeText>
              </TreeRow>
              <TreeRow $level={2}>
                <Expander aria-label="collapse" />
                <CheckBox>
                  <Check type="checkbox" id="layer" checked={shown} onChange={e => setShown(e.target.checked)} />
                  {shown && (
                    <svg width="12" height="12" viewBox="0 0 12 12" pointerEvents="none" aria-hidden="true">
                      <path d="M3 5.500l2 2.500 4-5" fill="none" stroke="#111" strokeWidth="2" />
                    </svg>
                  )}
                </CheckBox>
                <SelectedText htmlFor="layer">实验数据</SelectedText>
              </TreeRow>
              {LEGEND.map(l => (
                <TreeRow key={l.text} $level={3}>
                  <Swatch $fill={l.fill} $soft={l.soft} />{l.text}
                </TreeRow>
              ))}
            </TreeRows>
            <TreeFooter>
              <ScrollBar>
                <ScrollButton aria-label="left"><Chevron dir="left" w={2} /></ScrollButton>
                <ScrollTrack><ScrollThumb $share="76%" /></ScrollTrack>
                <ScrollButton aria-label="right"><Chevron dir="right" w={2} /></ScrollButton>
              </ScrollBar>
            </TreeFooter>
          </Tree>
        </Contents>

        <MapPane>
          <MapView><LandMap /></MapView>
          <MapFooter>
            <ViewButtons>
              <ViewButton $on aria-label="data view">
                <svg width="9" height="9" viewBox="0 0 9 9"><path d="M.5.5h8v8h-8z" fill="#d9e8b0" stroke="#333" /><path d="M2 7l5-5v5z" fill="#6fa355" /></svg>
              </ViewButton>
              <ViewButton aria-label="layout view">
                <svg width="9" height="9" viewBox="0 0 9 9"><path d="M1.500.5h4l2 2v6h-6zM3 4h3M3 6h3" fill="#fff" stroke="#333" /></svg>
              </ViewButton>
              <ShortDivider />
              <ViewButton aria-label="refresh">
                <svg width="10" height="10" viewBox="0 0 10 10" fill="none" stroke="#24425f"><path d="M1 4a4 4 0 0 1 7-1M9 6a4 4 0 0 1-7 1M8.500 0v3.500H5M1.500 10V6.500H5" /></svg>
              </ViewButton>
              <ViewButton aria-label="pause">
                <svg width="8" height="8" viewBox="0 0 8 8" stroke="#24527f" strokeWidth="2"><path d="M2 1v6M6 1v6" /></svg>
              </ViewButton>
            </ViewButtons>
            <ScrollBar>
              <ScrollButton aria-label="left"><Chevron dir="left" w={2} /></ScrollButton>
              <ScrollTrack><ScrollThumb $share="100%" /></ScrollTrack>
            </ScrollBar>
          </MapFooter>
        </MapPane>
      </Workspace>
      <StatusBar>所选要素的数目: 711</StatusBar>

      <PopupMenu items={LAYER_MENU} x={116} y={254} w={285} />
      <PopupMenu items={DATA_MENU} x={400} y={644} w={233} />
      <Tooltip role="tooltip">
        <TooltipTitle>导出数据(E)</TooltipTitle>
        <TooltipText>将此图层的数据以 shapefile<br />或地理数据库要素类的形式保存</TooltipText>
      </Tooltip>
      <Highlight />
      <Arrow width="130" height="208" viewBox="0 0 130 208" aria-hidden="true">
        <path d="M7 4l22 16-6 4L125 204 15 28l-7 4z" fill="#f23c3c" />
      </Arrow>
      <Watermark>
        <BrandRow>
          <span>Bai</span>
          <svg width="54" height="60" viewBox="0 0 54 60" fill="#fff" stroke="#d8d8d8" aria-hidden="true">
            <ellipse cx="9" cy="23" rx="7" ry="9" />
            <ellipse cx="21" cy="11" rx="6.500" ry="9.500" />
            <ellipse cx="37" cy="12" rx="7" ry="9" />
            <ellipse cx="47" cy="27" rx="7" ry="8.500" />
            <path d="M27 25c7 0 10 6 14 11 5 5 10 8 8 15-2 8-12 7-22 6-10 1-19 2-21-6-2-7 3-10 8-15 4-5 6-11 13-11z" />
            <text x="13" y="53" fontSize="24" fontFamily="Liberation Sans" fontWeight="400">du</text>
          </svg>
          <BrandCn>经验</BrandCn>
        </BrandRow>
        <SiteName>jingyan.baidu.com</SiteName>
      </Watermark>
    </Window>
  );
}
